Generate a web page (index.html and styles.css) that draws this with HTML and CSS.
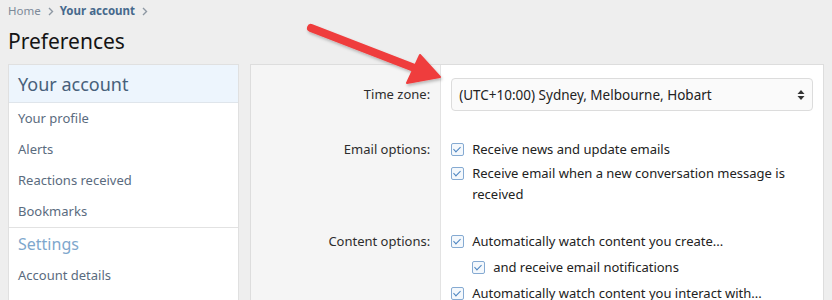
FILE: index.html
```html
<!doctype html>
<html>
<head>
<meta charset="utf-8">
<title>Preferences</title>
<link rel="stylesheet" href="styles.css">
</head>
<body>
<div class="page">
  <div class="crumbs">
    <a class="crumb">Home</a>
    <svg class="sep" width="6" height="9" viewBox="0 0 6 9"><path d="M1 1L4.5 4.5L1 8" fill="none" stroke="#8e98a3" stroke-width="1.4"/></svg>
    <a class="crumb crumb-cur">Your account</a>
    <svg class="sep" width="6" height="9" viewBox="0 0 6 9"><path d="M1 1L4.5 4.5L1 8" fill="none" stroke="#8e98a3" stroke-width="1.4"/></svg>
  </div>
  <h1 class="title">Preferences</h1>

  <div class="cols">
    <div class="side">
      <div class="side-head">Your account</div>
      <a class="side-link">Your profile</a>
      <a class="side-link">Alerts</a>
      <a class="side-link">Reactions received</a>
      <a class="side-link">Bookmarks</a>
      <div class="side-sub">Settings</div>
      <a class="side-link">Account details</a>
    </div>

    <div class="main">
      <div class="row row-first">
        <div class="row-label row-label-select">Time zone:</div>
        <div class="row-input">
          <div class="select">
            <span>(UTC+10:00) Sydney, Melbourne, Hobart</span>
            <svg class="select-arrow" width="8" height="12" viewBox="0 0 8 12"><path d="M4 1L7.5 5H0.5Z M4 11L0.5 7H7.5Z" fill="#333"/></svg>
          </div>
        </div>
      </div>
      <div class="row row-email">
        <div class="row-label">Email options:</div>
        <div class="row-input">
          <ul class="checks checks-tight">
            <li><span class="box"></span><span>Receive news and update emails</span></li>
            <li><span class="box"></span><span>Receive email when a new conversation message is received</span></li>
          </ul>
        </div>
      </div>
      <div class="row">
        <div class="row-label">Content options:</div>
        <div class="row-input">
          <ul class="checks">
            <li><span class="box"></span><span>Automatically watch content you create...</span></li>
            <li class="nested"><span class="box"></span><span>and receive email notifications</span></li>
            <li><span class="box"></span><span>Automatically watch content you interact with...</span></li>
          </ul>
        </div>
      </div>
    </div>
  </div>

  <svg class="arrow" width="832" height="120" viewBox="0 0 832 120">
    <defs>
      <filter id="sh" x="-10%" y="-30%" width="120%" height="160%">
        <feDropShadow dx="1" dy="2" stdDeviation="1.5" flood-color="#000" flood-opacity="0.25"/>
      </filter>
    </defs>
    <g filter="url(#sh)" fill="#ef3d3d" stroke="#ef3d3d">
      <line x1="311" y1="28" x2="417" y2="69" stroke-width="8" stroke-linecap="round"/>
      <polygon points="420,55 440,77 407,83" stroke-width="2" stroke-linejoin="round"/>
    </g>
  </svg>
</div>
</body>
</html>
```

FILE: styles.css
```css
*{margin:0;padding:0;box-sizing:border-box;}
body{background:#eeeeee;font-family:"Noto Sans","Open Sans",sans-serif;color:#222;font-size:13px;overflow:hidden;}
.page{position:relative;padding:0 8px;height:300px;}

.crumbs{height:22px;line-height:22px;font-size:11.5px;display:flex;align-items:center;}
.crumb{color:#7d8a99;}
.crumb-cur{color:#46698c;font-weight:bold;}
.sep{display:block;margin:0 6px 0 7px;}

.title{font-size:21px;font-weight:normal;color:#141414;line-height:36px;height:42px;padding-top:1px;}

.cols{display:flex;gap:11px;}

.side{width:232px;height:236px;background:#fff;border:1px solid #e0e0e0;border-bottom:0;}
.side-head{height:38px;line-height:38px;padding-left:9px;font-size:18px;color:#47607a;background:#edf5fd;border-bottom:1px solid #dfe5eb;}
.side-link{display:block;padding:6px 9px;line-height:19px;color:#5a6b7e;}
.side-sub{border-top:1px solid #e2e2e2;padding:6px 9px;line-height:20px;font-size:16px;color:#7ea7cd;}

.main{width:576px;height:236px;background:#fff;border:1px solid #dddddd;border-bottom:0;}
.row{display:grid;grid-template-columns:190px 1fr;}
.row-label{background:#f5f5f5;border-right:1px solid #e3e3e3;text-align:right;padding:14px 10px;line-height:21px;color:#2d2d2d;}
.row-input{padding:14px 10px;}
.row-first .row-label{padding-top:19px;}
.row-first .row-input{padding-top:13px;}
.row-email .row-input{padding-bottom:12px;}

.select{height:33px;border:1px solid #dcdcdc;border-radius:4px;background:#fafafa;display:flex;align-items:center;justify-content:space-between;padding:0 7px;font-size:13.5px;color:#222;}
.select-arrow{display:block;}

.checks{list-style:none;display:flex;flex-direction:column;gap:5px;}
.checks-tight{gap:3px;}
.checks li{display:flex;line-height:21px;}
.checks li.nested{padding-left:21px;}
.box{flex:none;width:13px;height:13px;margin:4px 8px 0 0;border:1px solid #85aad2;border-radius:2px;background:#f4f8fc;position:relative;}
.box::after{content:"";position:absolute;left:3px;top:1px;width:3px;height:6px;border:solid #4b84c0;border-width:0 1.5px 1.5px 0;transform:rotate(45deg);}

.arrow{position:absolute;left:0;top:0;pointer-events:none;}
```
